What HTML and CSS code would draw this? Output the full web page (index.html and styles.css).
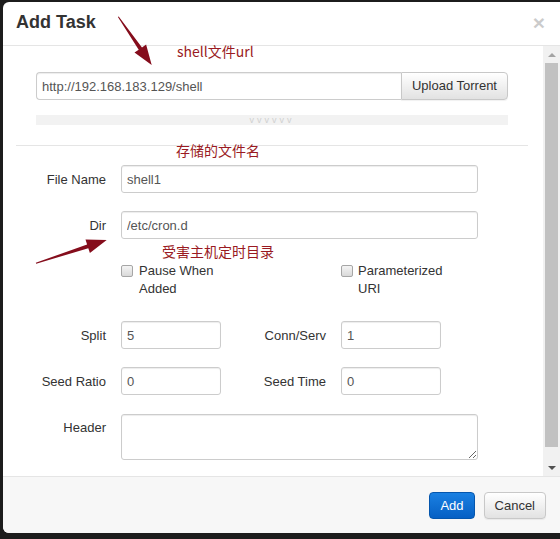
FILE: index.html
```html
<!DOCTYPE html>
<html>
<head>
<meta charset="utf-8">
<title>Add Task</title>
<link rel="stylesheet" href="styles.css">
</head>
<body>
<div class="stage">
  <div class="modal">
    <div class="modal-header">
      <h4 class="title">Add Task</h4>
      <span class="close">×</span>
    </div>
    <div class="modal-body">
      <div class="content">
        <div class="url-group">
          <input class="url-input" type="text" value="http://192.168.183.129/shell">
          <button class="btn btn-default btn-upload">Upload Torrent</button>
        </div>
        <div class="collapse-bar">vvvvvv</div>
        <hr class="divider">
        <div class="form">
          <div class="row row-file">
            <label class="lbl">File Name</label>
            <input class="field full" type="text" value="shell1">
          </div>
          <div class="row row-dir">
            <label class="lbl">Dir</label>
            <input class="field full" type="text" value="/etc/cron.d">
          </div>
          <div class="row row-check">
            <span></span>
            <label class="check check-pause"><input type="checkbox" class="cb"><span class="check-text">Pause When Added</span></label>
            <span></span>
            <label class="check check-param"><input type="checkbox" class="cb"><span class="check-text">Parameterized URI</span></label>
          </div>
          <div class="row row-split">
            <label class="lbl">Split</label>
            <input class="field" type="text" value="5">
            <label class="lbl">Conn/Serv</label>
            <input class="field" type="text" value="1">
          </div>
          <div class="row row-seed">
            <label class="lbl">Seed Ratio</label>
            <input class="field" type="text" value="0">
            <label class="lbl">Seed Time</label>
            <input class="field" type="text" value="0">
          </div>
          <div class="row row-header">
            <label class="lbl lbl-top">Header</label>
            <textarea class="field full area"></textarea>
          </div>
        </div>
      </div>
      <div class="scrollbar">
        <div class="sb-btn sb-up"></div>
        <div class="sb-track"><div class="sb-thumb"></div></div>
        <div class="sb-btn sb-down"></div>
      </div>
    </div>
    <div class="modal-footer">
      <button class="btn btn-primary">Add</button>
      <button class="btn btn-default">Cancel</button>
    </div>
  </div>

  <div class="annot">
    <svg class="arrows" width="560" height="539" viewBox="0 0 560 539">
      <path d="M118.7,16.4 L142,47.5 L146.1,44.6 L151.7,65 L134.5,52.6 L138.7,49.7 L117.9,17 Z"/>
      <path d="M35.8,262.8 L87.1,244.4 L85.5,239.6 L106.7,240 L89.9,252.9 L88.3,248.2 L36.2,263.8 Z"/>
    </svg>
    <span class="note note-url">shell文件url</span>
    <span class="note note-file">存储的文件名</span>
    <span class="note note-dir">受害主机定时目录</span>
  </div>
</div>
</body>
</html>
```

FILE: styles.css
```css
* { box-sizing: border-box; }

html, body {
  margin: 0;
  padding: 0;
}

body {
  width: 560px;
  height: 539px;
  overflow: hidden;
  background: #1c1c1c;
  font-family: "Liberation Sans", Arial, sans-serif;
  font-size: 13px;
  color: #333;
}

.stage {
  position: relative;
  width: 560px;
  height: 539px;
  padding: 2px 0 0 3px;
}

.modal {
  width: 557px;
  height: 531px;
  background: #fff;
  border-radius: 6px 0 0 6px;
  display: flex;
  flex-direction: column;
  overflow: hidden;
}

.modal-header {
  flex: none;
  height: 44px;
  border-bottom: 1px solid #e5e5e5;
  display: flex;
  align-items: center;
  justify-content: space-between;
  padding: 0 15px 3px 13px;
}

.title {
  margin: 0;
  font-size: 18px;
  font-weight: bold;
  line-height: 20px;
  color: #333;
}

.close {
  font-size: 21px;
  font-weight: bold;
  line-height: 1;
  color: #000;
  opacity: 0.2;
}

.modal-body {
  flex: none;
  height: 430px;
  display: flex;
}

.content {
  flex: 1;
  min-width: 0;
  padding: 26px 15px 0 13px;
  overflow: hidden;
}

.url-group {
  display: flex;
  height: 28px;
  margin: 0 20px;
}

.url-input {
  flex: 1;
  min-width: 0;
  height: 28px;
  border: 1px solid #ccc;
  border-right: 0;
  border-radius: 4px 0 0 4px;
  padding: 0 5px;
  font-family: "Liberation Sans", Arial, sans-serif;
  font-size: 13px;
  color: #555;
  box-shadow: inset 0 1px 1px rgba(0, 0, 0, 0.075);
  outline: none;
}

.btn {
  height: 27px;
  padding: 0 10px;
  border: 1px solid #ccc;
  border-radius: 4px;
  font-family: "Liberation Sans", Arial, sans-serif;
  font-size: 13px;
  line-height: 25px;
  cursor: pointer;
}

.btn-default {
  color: #333;
  background: linear-gradient(#ffffff, #e2e2e2);
  border-color: #c8c8c8;
  box-shadow: 0 1px 1px rgba(0, 0, 0, 0.06);
}

.btn-upload {
  height: 28px;
  border-radius: 0 4px 4px 0;
  line-height: 26px;
}

.btn-primary {
  color: #fff;
  background: linear-gradient(#1a80e2, #0660c4);
  border-color: #0556ad;
}

.collapse-bar {
  height: 10px;
  margin: 15px 20px 0;
  background: #f2f2f2;
  text-align: center;
  font-size: 9px;
  line-height: 10px;
  letter-spacing: 3px;
  color: #d0d0d0;
}

.divider {
  margin: 20px 0 0;
  border: 0;
  border-top: 1px solid #e5e5e5;
  height: 0;
}

.form {
  margin-top: 19px;
}

.row {
  display: grid;
  grid-template-columns: 90px 100px 90px 100px 22px;
  column-gap: 15px;
  align-items: center;
}

.row-dir { margin-top: 18px; }
.row-check { margin-top: 23px; align-items: start; }
.row-split { margin-top: 23px; }
.row-seed { margin-top: 18px; }
.row-header { margin-top: 19px; align-items: start; }

.lbl {
  text-align: right;
  color: #333;
  font-size: 13px;
  white-space: nowrap;
}

.lbl-top {
  padding-top: 6px;
  line-height: 16px;
}

.field {
  height: 28px;
  width: 100%;
  border: 1px solid #ccc;
  border-radius: 3px;
  padding: 0 5px;
  font-family: "Liberation Sans", Arial, sans-serif;
  font-size: 13px;
  color: #555;
  background: #fff;
  box-shadow: inset 0 1px 1px rgba(0, 0, 0, 0.075);
  outline: none;
}

.full {
  grid-column: 2 / 6;
}

.area {
  height: 46px;
  resize: vertical;
  display: block;
}

.check {
  display: flex;
  align-items: flex-start;
  gap: 6px;
  line-height: 18px;
  color: #333;
}

.check-param {
  gap: 5px;
}

.check-param .check-text {
  width: 90px;
}

.cb {
  appearance: none;
  -webkit-appearance: none;
  flex: none;
  width: 12px;
  height: 12px;
  margin: 3px 0 0;
  border: 1px solid #a6a6a6;
  border-radius: 2px;
  background: linear-gradient(#f4f4f4, #d9d9d9);
}

.scrollbar {
  flex: none;
  width: 17px;
  background: #f1f1f1;
  display: flex;
  flex-direction: column;
}

.sb-btn {
  height: 17px;
  display: flex;
  align-items: center;
  justify-content: center;
}

.sb-up::before {
  content: "";
  border-left: 4px solid transparent;
  border-right: 4px solid transparent;
  border-bottom: 4px solid #a3a3a3;
}

.sb-down::before {
  content: "";
  border-left: 4px solid transparent;
  border-right: 4px solid transparent;
  border-top: 4px solid #505050;
}

.sb-track {
  flex: 1;
  padding: 0 2px;
}

.sb-thumb {
  height: 384px;
  background: #c1c1c1;
}

.modal-footer {
  flex: none;
  height: 57px;
  border-top: 1px solid #e5e5e5;
  background: #f7f7f7;
  display: flex;
  justify-content: flex-end;
  align-items: flex-start;
  gap: 9px;
  padding: 15px 14px 0 0;
}

/* screenshot annotations drawn over the dialog */
.annot {
  position: absolute;
  top: 0;
  left: 0;
  width: 560px;
  height: 539px;
  pointer-events: none;
}

.arrows {
  display: block;
  fill: #850d1c;
}

.note {
  position: absolute;
  font-family: "Noto Sans CJK SC", sans-serif;
  font-size: 14px;
  line-height: 16px;
  color: #9a1a22;
  white-space: nowrap;
}

.note-url { left: 177px; top: 43px; }
.note-file { left: 176px; top: 142px; }
.note-dir { left: 162px; top: 243px; }
```
